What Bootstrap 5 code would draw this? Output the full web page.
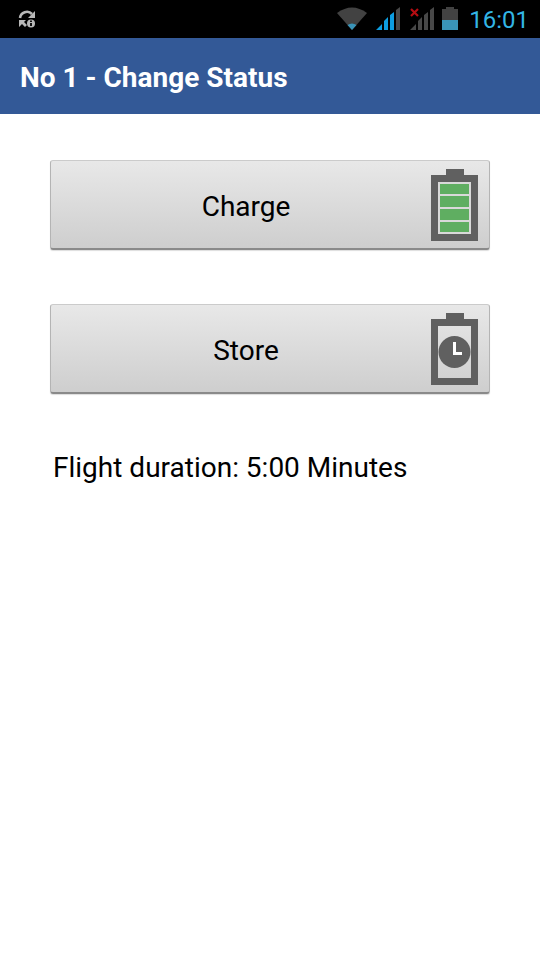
<!DOCTYPE html>
<html lang="en">
<head>
<meta charset="utf-8">
<meta name="viewport" content="width=device-width, initial-scale=1">
<title>No 1 - Change Status</title>
<link href="https://cdn.jsdelivr.net/npm/bootstrap@5.3.0/dist/css/bootstrap.min.css" rel="stylesheet">
<style>
body { font-family: Roboto, "Liberation Sans", sans-serif; color: #000; background: #fff; }
.status-bar { background: #000; height: 38px; padding: 0 11px 0 18px; }
.status-bar svg, .action svg { display: block; flex: none; }
.clock { color: #33b5e5; font-size: 24px; line-height: 36px; padding-top: 2px; margin-left: 10px; }
.title-bar { background: #335997; padding: 22px 20px 18px; }
.title-bar h1 { color: #fff; font-size: 28px; line-height: 36px; font-weight: 700; }
.content { padding: 46px 50px; }
.action {
  min-height: 90px; padding: 0 11px 0 10px; border-radius: 3px; color: #000;
  font-size: 28px; line-height: 36px; border: 1px solid #b4b4b4; border-top-color: #cbcbcb; border-bottom: 2px solid #8a8a8a;
  background: linear-gradient(#e8e8e8, #cecece);
  box-shadow: 0 1px 1px #ddd;
}
.action:hover, .action:active { color: #000; }
.action span { padding-top: 4px; }
.actions { gap: 54px; }
.duration { font-size: 28px; line-height: 36px; padding: 0 3px; margin-top: 56px; }
</style>
<script src="https://cdn.jsdelivr.net/npm/bootstrap@5.3.0/dist/js/bootstrap.bundle.min.js" defer></script>
</head>
<body>
<div class="status-bar d-flex align-items-center">
  <svg class="me-auto" width="18" height="20" viewBox="0 0 18 20" aria-hidden="true">
    <path d="M2 9a7 7 0 0 1 12-4" fill="none" stroke="#b8b8b8" stroke-width="2.6"/>
    <path d="M17 2v7h-7z" fill="#b8b8b8"/>
    <path d="M1 11h7L6 13l3 3-2 2-3-3-3 3z" fill="#b8b8b8"/>
    <circle cx="13" cy="14.500" r="4" fill="#b8b8b8"/>
    <path d="M12 14h2v3h-2zM12 11.500h2v1.500h-2z" fill="#111"/>
  </svg>
  <svg width="122" height="38" viewBox="338 0 122 38" role="img" aria-label="Wi-Fi, signal, no second SIM, battery half full">
    <path d="M338 13Q353 2 368 13L353 30z" fill="#424242"/>
    <path d="M348.500 25q4.500-3 9 0L353 30z" fill="#3a94b8"/>
    <path d="M377 30l6-6v6zM385 30v-9l4-4v13zM391 30V15l4-3v18z" fill="#0d9de0"/>
    <path d="M397 30V10l4-3v23z" fill="#484848"/>
    <path d="M411 30l6-6v6zM419 30v-9l4-4v13zM425 30V15l4-3v18zM431 30V10l4-3v23z" fill="#484848"/>
    <path d="M412 9l7 7M419 9l-7 7" stroke="#b50d12" stroke-width="2.200"/>
    <path d="M443 9h4V7h8v2h4v11h-16z" fill="#424242"/>
    <path d="M443 20h16v10h-16z" fill="#3a94b8"/>
  </svg>
  <span class="clock">16:01</span>
</div>
<header class="title-bar"><h1 class="m-0">No 1 - Change Status</h1></header>
<main class="content">
  <div class="actions d-flex flex-column">
    <button type="button" class="action btn d-flex align-items-center w-100">
      <span class="flex-fill">Charge</span>
      <svg width="47" height="72" viewBox="0 0 47 72" aria-hidden="true">
        <path d="M0 6h15V0h18v6h14v66H0zM7 13v52h33V13z" fill="#606060" fill-rule="evenodd"/>
        <path d="M7 13h33v52H7z" fill="#d9d9d9"/>
        <path d="M9 15h29v10H9zM9 27h29v11H9zM9 40h29v11H9zM9 53h29v10H9z" fill="#5fae61"/>
      </svg>
    </button>
    <button type="button" class="action btn d-flex align-items-center w-100">
      <span class="flex-fill">Store</span>
      <svg width="47" height="72" viewBox="0 0 47 72" aria-hidden="true">
        <path d="M0 6h15V0h18v6h14v66H0zM7 13v52h33V13z" fill="#606060" fill-rule="evenodd"/>
        <circle cx="23.500" cy="39" r="16" fill="#606060"/>
        <path d="M22 29h3v10h6v3h-9z" fill="#fff"/>
      </svg>
    </button>
  </div>
  <p class="duration mb-0">Flight duration: 5:00 Minutes</p>
</main>
</body>
</html>
